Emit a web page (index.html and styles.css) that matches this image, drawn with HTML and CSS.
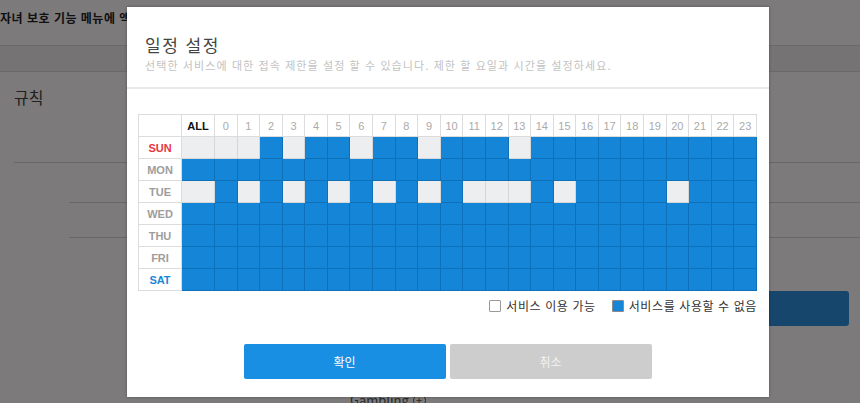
FILE: index.html
```html
<!DOCTYPE html>
<html lang="ko">
<head>
    <meta charset="UTF-8">
    <title>일정 설정</title>
    <link rel="stylesheet" href="styles.css">
</head>
<body>
<div class="page">
    <div class="page-head">자녀 보호 기능 메뉴에 액세스하려면 관리자 암호를 입력하세요</div>
    <div class="page-tabs"></div>
    <div class="rules">
        <h2>규칙</h2>
        <div class="rule-list">
            <div class="rule-field"></div>
            <div class="rule-field short"></div>
        </div>
        <div class="save-row"><span class="save-btn"></span></div>
        <div class="category">Gambling <span class="plus">+</span></div>
    </div>
</div>

<div class="overlay"></div>

<div class="modal">
    <div class="modal-head">
        <h1>일정 설정</h1>
        <p>선택한 서비스에 대한 접속 제한을 설정 할 수 있습니다. 제한 할 요일과 시간을 설정하세요.</p>
    </div>
    <div class="modal-body">
        <table class="schedule" id="schedule">
            <colgroup id="cols"></colgroup>
            <thead><tr id="hours"></tr></thead>
            <tbody id="days"></tbody>
        </table>
        <div class="legend">
            <span class="item"><i class="box"></i>서비스 이용 가능</span>
            <span class="item"><i class="box on"></i>서비스를 사용할 수 없음</span>
        </div>
        <div class="actions">
            <span class="btn ok">확인</span>
            <span class="btn cancel">취소</span>
        </div>
    </div>
</div>

<script>
  // 허용된 시간(회색) 목록, ALL은 -1
  var days = [
    {name: "SUN", cls: "sun", open: [-1, 0, 1, 3, 6, 9, 13]},
    {name: "MON", cls: "", open: []},
    {name: "TUE", cls: "", open: [-1, 1, 3, 5, 7, 9, 11, 12, 13, 15, 20]},
    {name: "WED", cls: "", open: []},
    {name: "THU", cls: "", open: []},
    {name: "FRI", cls: "", open: []},
    {name: "SAT", cls: "sat", open: []}
  ];
  var cols = document.getElementById("cols");
  var head = document.getElementById("hours");
  var body = document.getElementById("days");
  var html = '<col class="c-label"><col class="c-all">';
  var th = '<th></th><th class="all">ALL</th>';
  for (var h = 0; h < 24; h++) {
    html += '<col class="c-hour">';
    th += '<th>' + h + '</th>';
  }
  cols.innerHTML = html;
  head.innerHTML = th;
  var rows = "";
  for (var i = 0; i < days.length; i++) {
    var d = days[i];
    rows += '<tr><td class="day ' + d.cls + '">' + d.name + '</td>';
    for (var j = -1; j < 24; j++) {
      var open = d.open.indexOf(j) > -1;
      rows += '<td class="' + (open ? "free" : "block") + '"></td>';
    }
    rows += '</tr>';
  }
  body.innerHTML = rows;
</script>
</body>
</html>
```

FILE: styles.css
```css
*{
    margin: 0;
    padding: 0;
    box-sizing: border-box;
}
body{
    width: 860px;
    height: 403px;
    overflow: hidden;
    position: relative;
    background-color: #fff;
    font-family: "Noto Sans CJK KR", "Liberation Sans", sans-serif;
    color: #333;
}
/* 뒤쪽 페이지 */
.page-head{
    height: 46px;
    padding-top: 9px;
    border-bottom: 1px solid #d9d9d9;
    font-size: 12px;
    font-weight: bold;
    color: #222;
    white-space: nowrap;
    letter-spacing: 0.5px;
}
.page-tabs{
    height: 26px;
    background-color: #f1f1f1;
    border-bottom: 1px solid #d9d9d9;
}
.rules{
    padding-left: 14px;
}
.rules h2{
    margin-top: 15px;
    font-size: 16px;
    line-height: 20px;
    font-weight: normal;
    color: #444;
}
.rule-list{
    margin-top: 55px;
    border-top: 1px solid #d6d6d6;
}
.rule-field{
    margin-left: 55px;
    height: 40px;
    border-bottom: 1px solid #d6d6d6;
}
.rule-field.short{
    height: 35px;
}
.save-row{
    display: flex;
    justify-content: flex-end;
    padding-right: 11px;
    margin-top: 53px;
}
.save-btn{
    width: 100px;
    height: 35px;
    border-radius: 3px;
    background-color: #2c92e2;
}
.category{
    margin-top: 66px;
    margin-left: 336px;
    font-size: 13px;
    line-height: 16px;
    color: #555;
}
.category .plus{
    display: inline-block;
    width: 13px;
    height: 13px;
    border: 1.5px solid #555;
    border-radius: 50%;
    font-size: 11px;
    line-height: 10px;
    text-align: center;
}
.overlay{
    position: absolute;
    left: 0;
    top: 0;
    width: 860px;
    height: 403px;
    background-color: rgba(3, 0, 0, 0.52);
}
/* 일정 설정 팝업 */
.modal{
    position: absolute;
    left: 127px;
    top: 7px;
    width: 642px;
    height: 390px;
    background-color: #fff;
    box-shadow: 0 0 3px rgba(0, 0, 0, 0.3);
}
.modal-head{
    padding: 27px 18px 14px;
    border-bottom: 2px solid #e8e8e8;
}
.modal-head h1{
    font-size: 17px;
    line-height: 22px;
    font-weight: normal;
    color: #444;
    letter-spacing: 1.5px;
}
.modal-head p{
    margin-top: 1px;
    font-size: 11px;
    line-height: 16px;
    color: #c2c2c2;
    letter-spacing: 1.1px;
    white-space: nowrap;
}
.modal-body{
    padding: 25px 12px 0 11px;
}
.schedule{
    width: 619px;
    table-layout: fixed;
    border-collapse: collapse;
    font-family: "Liberation Sans", Arial, sans-serif;
    font-size: 11px;
}
.c-label{
    width: 43px;
}
.c-all{
    width: 33px;
}
.schedule th,
.schedule td{
    height: 22px;
    padding: 0;
    text-align: center;
    border: 1px solid #dcdcdc;
}
.schedule th{
    color: #aaa;
    font-weight: normal;
    background-color: #fff;
}
.schedule th.all{
    color: #111;
    font-weight: bold;
}
.schedule td.day{
    font-weight: bold;
    color: #9d9d9d;
    background-color: #fff;
}
.schedule td.sun{
    color: #e8363c;
}
.schedule td.sat{
    color: #1a86d8;
}
.schedule td.free{
    background-color: #eceef0;
    border-color: #d6d6d6;
}
.schedule td.block{
    background-color: #1585d8;
    border-color: #0f70ba;
}
.legend{
    display: flex;
    justify-content: flex-end;
    gap: 16px;
    margin-top: 7px;
    font-size: 12px;
    line-height: 16px;
    color: #333;
    letter-spacing: 0.6px;
}
.legend .item{
    display: flex;
    align-items: center;
}
.legend .box{
    display: inline-block;
    width: 12px;
    height: 12px;
    margin-right: 5px;
    border: 1px solid #999;
    border-radius: 1px;
    background-color: #fff;
}
.legend .box.on{
    border-color: #8a8a8a;
    background-color: #1585d8;
}
.actions{
    display: flex;
    justify-content: center;
    gap: 4px;
    margin-top: 30px;
}
.btn{
    width: 202px;
    height: 35px;
    line-height: 35px;
    border-radius: 2px;
    text-align: center;
    font-size: 12px;
    color: #fff;
}
.btn.ok{
    background-color: #198fe3;
}
.btn.cancel{
    background-color: #cdcdcd;
    color: #f2f2f2;
}
```
